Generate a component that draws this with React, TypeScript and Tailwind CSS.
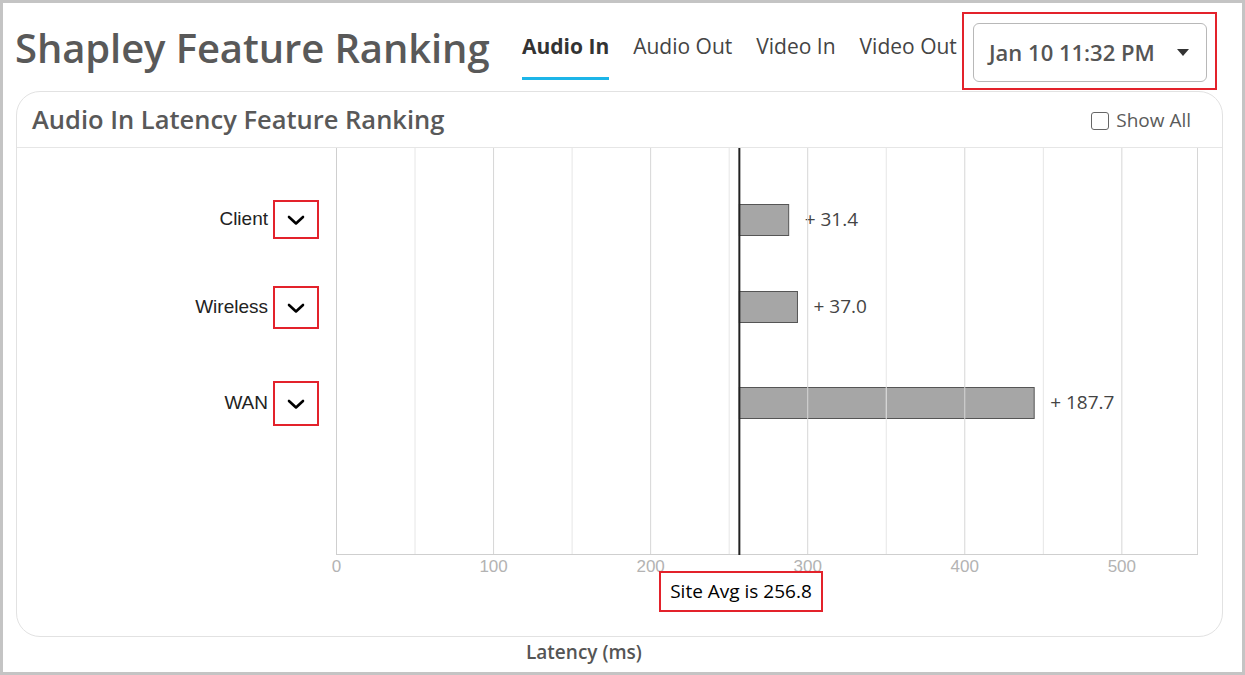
import React from 'react';

const SCALE = 1.5707;
const AVG = 256.8;
const PLOT_W = 862;
const PLOT_H = 407;

const features = [
  { name: 'Client', value: 31.4, y: 56, box: 'h-[39px]', gap: 'mt-[52px]' },
  { name: 'Wireless', value: 37.0, y: 143, box: 'h-[43px]', gap: 'mt-[47px]' },
  { name: 'WAN', value: 187.7, y: 239, box: 'h-[45px]', gap: 'mt-[52px]' },
];

const tabs = ['Audio In', 'Audio Out', 'Video In', 'Video Out'];

function Chevron() {
  return (
    <svg width="18" height="12" viewBox="0 0 18 12">
      <path d="M2 3 L9 9.5 L16 3" fill="none" stroke="#000" strokeWidth="2.6" strokeLinecap="round" strokeLinejoin="round" />
    </svg>
  );
}

function Plot() {
  const avgX = AVG * SCALE;
  const ticks = [];
  for (let v = 50; v <= 500; v += 50) ticks.push(v);

  return (
    <div className="relative">
      <svg width={PLOT_W + 2} height={440} className="block overflow-visible">
        {features.map((f) => {
          const w = f.value * SCALE;
          return (
            <g key={f.name}>
              <rect x={avgX} y={f.y + 0.5} width={w} height={31} fill="#a6a6a6" stroke="#555" strokeWidth="1" />
              <text
                x={avgX + w + 16}
                y={f.y + 17}
                dominantBaseline="middle"
                fontFamily="'Open Sans', sans-serif"
                fontSize="19"
                fill="#444"
              >
                + {f.value.toFixed(1)}
              </text>
            </g>
          );
        })}
        {ticks.map((v) => (
          <line
            key={v}
            x1={v * SCALE + 0.5}
            x2={v * SCALE + 0.5}
            y1={0}
            y2={PLOT_H}
            stroke={v % 100 === 0 ? '#d6d6d6' : '#e6e6e6'}
            strokeWidth="1"
          />
        ))}
        <line x1={0.5} x2={0.5} y1={0} y2={PLOT_H} stroke="#cfcfcf" />
        <line x1={PLOT_W - 0.5} x2={PLOT_W - 0.5} y1={0} y2={PLOT_H} stroke="#d6d6d6" />
        <line x1={0} x2={PLOT_W} y1={PLOT_H - 0.5} y2={PLOT_H - 0.5} stroke="#cfcfcf" />
        <line x1={avgX} x2={avgX} y1={0} y2={PLOT_H} stroke="#222" strokeWidth="2" />
        {[0, 100, 200, 300, 400, 500].map((v) => (
          <text
            key={v}
            x={v * SCALE + 0.5}
            y={420}
            textAnchor="middle"
            dominantBaseline="middle"
            fontFamily="'Liberation Sans', Arial, sans-serif"
            fontSize="17"
            fill="#b3b3b3"
          >
            {v}
          </text>
        ))}
      </svg>
      <div className="absolute left-[323px] top-[423px] w-[164px] h-[41px] border-2 border-[#e3222b] bg-white flex items-center justify-center text-[19px] text-black">
        Site Avg is 256.8
      </div>
    </div>
  );
}

export default function App() {
  return (
    <div className="w-[1245px] h-[675px] border-[3px] border-[#c4c4c4] bg-white flex flex-col font-['Open_Sans',sans-serif] text-[#595959]">
      <div className="h-[88px] flex items-start shrink-0">
        <div className="w-[519px] pl-[12px] pt-[25px] text-[40px] leading-[40px] font-semibold tracking-[-0.1px] whitespace-nowrap">
          Shapley Feature Ranking
        </div>
        <div className="flex gap-[24px] pt-[29px] text-[21px] leading-[28px]">
          {tabs.map((t, i) => (
            <div
              key={t}
              className={
                i === 0
                  ? 'pb-[17px] border-b-[3px] border-[#1cb5e8] font-bold text-[#333]'
                  : 'pb-[17px] border-b-[3px] border-transparent text-[#444]'
              }
            >
              {t}
            </div>
          ))}
        </div>
        <div className="ml-auto mr-[25px] mt-[9px] border-2 border-[#e3222b] pt-[9px] pb-[6px] pl-[9px] pr-[8px]">
          <div className="w-[234px] h-[59px] border border-[#b8b8b8] rounded-[6px] flex items-center pl-[15px] pr-[17px] text-[22px] font-semibold text-[#555]">
            <span>Jan 10 11:32 PM</span>
            <span className="ml-auto w-0 h-0 border-l-[6px] border-r-[6px] border-t-[7px] border-l-transparent border-r-transparent border-t-[#333]" />
          </div>
        </div>
      </div>

      <div className="ml-[13px] mr-[19px] h-[546px] shrink-0 border border-[#e2e2e2] rounded-[24px] flex flex-col">
        <div className="h-[56px] border-b border-[#e6e6e6] flex items-center pl-[15px] pr-[31px]">
          <span className="text-[25.5px] font-semibold">Audio In Latency Feature Ranking</span>
          <label className="ml-auto flex items-center gap-[7px] text-[19px] text-[#5a5a5a] mt-[2px]">
            <span className="w-[18px] h-[18px] border-[1.5px] border-[#666] rounded-[3px] bg-white" />
            Show All
          </label>
        </div>
        <div className="flex">
          <div className="w-[319px] shrink-0 flex flex-col items-end pr-[17px] font-['Liberation_Sans',Arial,sans-serif] text-[19px] text-[#222]">
            {features.map((f) => (
              <div key={f.name} className={`flex items-center gap-[5px] ${f.gap}`}>
                <span>{f.name}</span>
                <span className={`w-[46px] ${f.box} border-2 border-[#e3222b] flex items-center justify-center`}>
                  <Chevron />
                </span>
              </div>
            ))}
          </div>
          <Plot />
        </div>
      </div>

      <div className="pl-[523px] pt-[1px] text-[19px] font-semibold text-[#555]">Latency (ms)</div>
    </div>
  );
}
